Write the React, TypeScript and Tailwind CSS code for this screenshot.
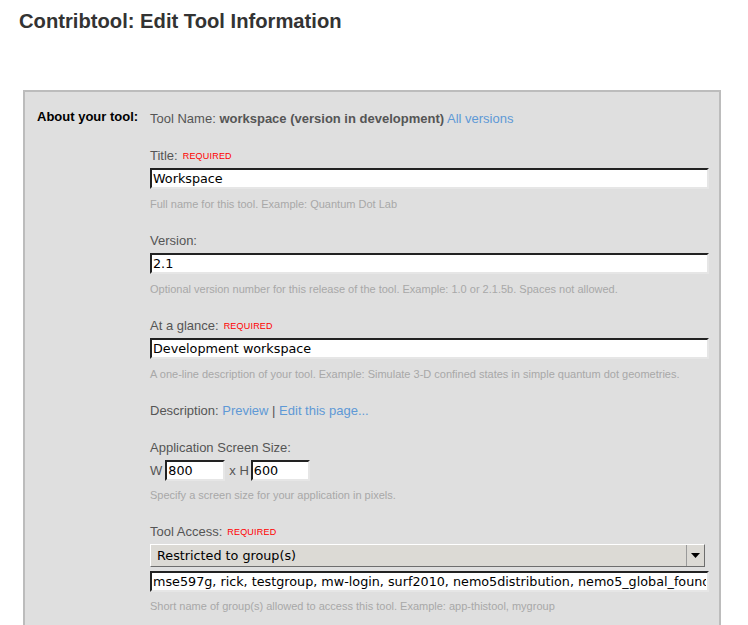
import React from "react"

const sans = "font-['Liberation_Sans',Arial,sans-serif]"
const field = "font-['DejaVu_Sans',sans-serif]"

const Required = () => (
  <span className="ml-[5px] text-[9px] tracking-[0.2px] text-[#ff0000] uppercase align-[1px]">required</span>
)

const TextInput = ({ value, className = "w-[559px]" }: { value: string; className?: string }) => (
  <input
    readOnly
    defaultValue={value}
    className={`${field} ${className} h-[21px] bg-white text-[12.75px] text-black px-[1px] outline-none border-2 border-t-[#222] border-l-[#222] border-r-[#e6e6e6] border-b-[#e6e6e6] block`}
  />
)

const Help = ({ children, className = "mt-[8px]" }: { children: React.ReactNode; className?: string }) => (
  <p className={`${className} text-[11px] leading-[14px] text-[#a8a8a8]`}>{children}</p>
)

const Label = ({ children }: { children: React.ReactNode }) => (
  <div className="text-[13px] leading-[16px] text-[#555] mb-[4px]">{children}</div>
)

export default function App() {
  return (
    <div className={`${sans} min-h-screen bg-white pt-[9px]`}>
      <h1 className="ml-[19px] text-[20.2px] leading-[24px] font-bold text-[#333]">
        Contribtool: Edit Tool Information
      </h1>

      <div className="ml-[23px] mt-[57px] w-[698px] h-[600px] border-2 border-[#bcbcbc] bg-[#dfdfdf] flex pt-[19px]">
        {/* left label */}
        <div className="w-[125px] shrink-0 pl-[12px] text-[13px] leading-[16px] font-bold text-black">
          <span className="relative -top-[2px]">About your tool:</span>
        </div>

        <div className="flex-1">
          <div className="text-[13px] leading-[16px] text-[#555] mb-[21px]">
            Tool Name: <b className="font-bold">workspace (version in development)</b>{" "}
            <a className="text-[#5e99d6]">All versions</a>
          </div>

          <div className="mb-[22px]">
            <Label>
              Title:<Required />
            </Label>
            <TextInput value="Workspace" />
            <Help>Full name for this tool. Example: Quantum Dot Lab</Help>
          </div>

          <div className="mb-[22px]">
            <Label>Version:</Label>
            <TextInput value="2.1" />
            <Help>Optional version number for this release of the tool. Example: 1.0 or 2.1.5b. Spaces not allowed.</Help>
          </div>

          <div className="mb-[22px]">
            <Label>
              At a glance:<Required />
            </Label>
            <TextInput value="Development workspace" />
            <Help>A one-line description of your tool. Example: Simulate 3-D confined states in simple quantum dot geometries.</Help>
          </div>

          <div className="text-[13px] leading-[16px] text-[#555] mb-[21px]">
            Description: <a className="text-[#5e99d6]">Preview</a> | <a className="text-[#5e99d6]">Edit this page...</a>
          </div>

          <div className="mb-[22px]">
            <Label>Application Screen Size:</Label>
            <div className="flex items-center text-[13px] text-[#555]">
              <span className="mr-[3px]">W</span>
              <TextInput value="800" className="w-[60px]" />
              <span className="ml-[4px] mr-[2px]">x H</span>
              <TextInput value="600" className="w-[59px]" />
            </div>
            <Help className="mt-[7px]">Specify a screen size for your application in pixels.</Help>
          </div>

          <div>
            <Label>
              Tool Access:<Required />
            </Label>
            <div className={`${field} w-[555px] h-[23px] flex items-center bg-[#dcdad5] border border-t-white border-l-white border-r-[#6e6e6e] border-b-[#6e6e6e] text-[12.75px] text-black`}>
              <span className="flex-1 pl-[6px]">Restricted to group(s)</span>
              <span className="w-[18px] h-full flex items-center justify-center border-l border-l-[#9a9a9a]">
                <svg width="9" height="5" viewBox="0 0 9 5">
                  <path d="M0 0h9L4.5 5z" fill="#000" />
                </svg>
              </span>
            </div>
            <div className="mt-[4px]">
              <TextInput value="mse597g, rick, testgroup, mw-login, surf2010, nemo5distribution, nemo5_global_foundation" />
            </div>
            <Help className="mt-[7px]">Short name of group(s) allowed to access this tool. Example: app-thistool, mygroup</Help>
          </div>
        </div>
      </div>
    </div>
  )
}
